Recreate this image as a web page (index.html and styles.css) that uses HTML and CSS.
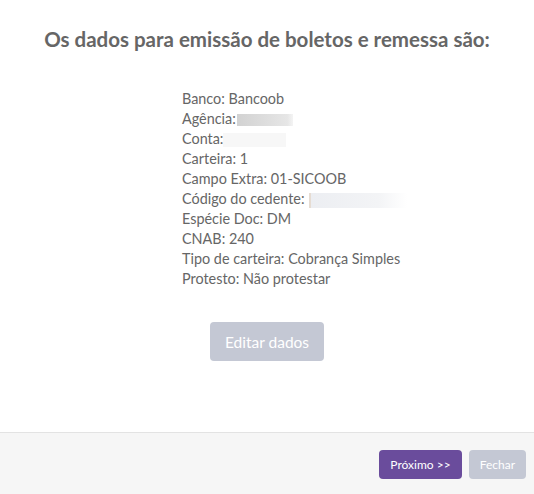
FILE: index.html
```html
<!DOCTYPE html>
<html lang="pt-BR">
<head>
  <meta charset="UTF-8">
  <title>Dados de emissão</title>
  <link rel="stylesheet" href="styles.css">
</head>
<body>

<div class="modal">
  <div class="modal-body">
    <h2>Os dados para emissão de boletos e remessa são:</h2>

    <ul class="dados">
      <li>Banco: Bancoob</li>
      <li>Agência:<span class="blur blur-agencia"></span></li>
      <li>Conta:<span class="blur blur-conta"></span></li>
      <li>Carteira: 1</li>
      <li>Campo Extra: 01-SICOOB</li>
      <li>Código do cedente:<span class="blur blur-codigo"></span></li>
      <li>Espécie Doc: DM</li>
      <li>CNAB: 240</li>
      <li>Tipo de carteira: Cobrança Simples</li>
      <li>Protesto: Não protestar</li>
    </ul>

    <div class="editar">
      <button class="btn btn-gray btn-lg">Editar dados</button>
    </div>
  </div>

  <div class="modal-footer">
    <button class="btn btn-purple">Próximo &gt;&gt;</button>
    <button class="btn btn-gray">Fechar</button>
  </div>
</div>

</body>
</html>
```

FILE: styles.css
```css
body {
  margin: 0;
  font-family: Lato, "Open Sans", sans-serif;
  background: #fff;
  color: #666;
}
.modal {
  width: 534px;
  height: 494px;
  display: flex;
  flex-direction: column;
}
.modal-body {
  flex: 1;
}
h2 {
  margin: 26px 0 0;
  text-align: center;
  font-size: 20.5px;
  font-weight: bold;
  color: #666;
  line-height: 26px;
}
.dados {
  list-style: none;
  margin: 37px 0 0 182px;
  padding: 0;
  font-size: 14.4px;
  line-height: 20px;
}
.blur {
  display: inline-block;
  vertical-align: middle;
  height: 12px;
}
.blur-agencia {
  width: 56px;
  margin-left: 1px;
  background: linear-gradient(to right, #d2d2d2, #e6e6e6 90%, #f4f4f4);
}
.blur-conta {
  width: 63px;
  height: 14px;
  background: #f7f7f7;
}
.blur-codigo {
  width: 96px;
  height: 15px;
  margin-left: 4px;
  background: linear-gradient(to right, #eceef2, #f3f4f6 70%, #fff);
  border-left: 2px solid #e6dcd2;
}
.editar {
  margin: 33px 0 0 210px;
}
.btn {
  font-family: Lato, "Open Sans", sans-serif;
  border: none;
  border-radius: 4px;
  color: #fff;
  font-size: 12px;
  height: 29px;
  padding: 0 11px;
  cursor: pointer;
}
.btn-lg {
  width: 114px;
  height: 39px;
  font-size: 15.5px;
  padding: 0;
}
.btn-gray {
  background: #c4c8d4;
}
.btn-purple {
  background: #6a4c9c;
}
.modal-footer {
  height: 62px;
  background: #f6f6f6;
  border-top: 1px solid #e3e3e3;
  display: flex;
  justify-content: flex-end;
  align-items: flex-start;
  gap: 7px;
  padding: 17px 8px 0 0;
  box-sizing: border-box;
}
```
